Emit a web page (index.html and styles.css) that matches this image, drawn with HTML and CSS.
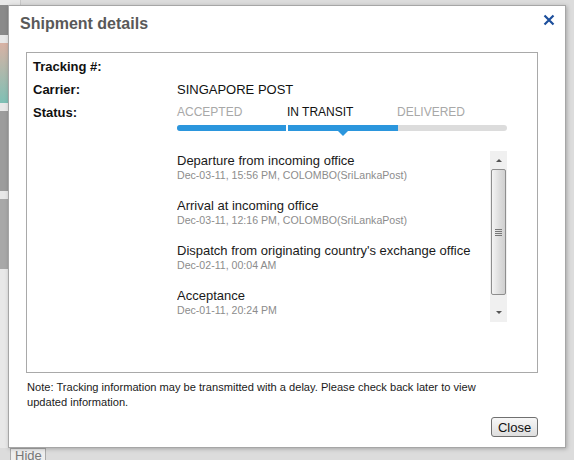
FILE: index.html
```html
<!DOCTYPE html>
<html lang="en">
<head>
    <meta charset="UTF-8">
    <title>Shipment details</title>
    <link rel="stylesheet" href="styles.css">
</head>
<body>
    <div class="page">
        <div class="side">
            <div class="thumb t1"></div>
            <div class="thumb t2"></div>
            <div class="thumb t3"></div>
            <div class="thumb t4"></div>
        </div>
        <button class="hide-btn">Hide</button>
    </div>

    <div class="dialog">
        <div class="dialog-head">
            <h2>Shipment details</h2>
            <span class="close-x">
                <svg width="12" height="12" viewBox="0 0 12 12"><path d="M1.5 1.5 L10.5 10.5 M10.5 1.5 L1.5 10.5" stroke="#1d4f9c" stroke-width="2.2" fill="none"/></svg>
            </span>
        </div>

        <div class="details">
            <div class="row">
                <div class="label">Tracking #:</div>
                <div class="value"></div>
            </div>
            <div class="row">
                <div class="label">Carrier:</div>
                <div class="value">SINGAPORE POST</div>
            </div>
            <div class="row status-row">
                <div class="label">Status:</div>
                <div class="value">
                    <div class="steps">
                        <span class="step">ACCEPTED</span>
                        <span class="step current">IN TRANSIT</span>
                        <span class="step">DELIVERED</span>
                    </div>
                    <div class="bar">
                        <div class="seg done"></div>
                        <div class="seg done"></div>
                        <div class="seg"></div>
                    </div>
                </div>
            </div>

            <div class="events-wrap">
                <div class="events">
                    <div class="event">
                        <div class="ev-title">Departure from incoming office</div>
                        <div class="ev-date">Dec-03-11, 15:56 PM, COLOMBO(SriLankaPost)</div>
                    </div>
                    <div class="event">
                        <div class="ev-title">Arrival at incoming office</div>
                        <div class="ev-date">Dec-03-11, 12:16 PM, COLOMBO(SriLankaPost)</div>
                    </div>
                    <div class="event">
                        <div class="ev-title">Dispatch from originating country's exchange office</div>
                        <div class="ev-date">Dec-02-11, 00:04 AM</div>
                    </div>
                    <div class="event">
                        <div class="ev-title">Acceptance</div>
                        <div class="ev-date">Dec-01-11, 20:24 PM</div>
                    </div>
                </div>
                <div class="scrollbar">
                    <div class="arrow up"></div>
                    <div class="sb-thumb"><span class="grip"></span></div>
                    <div class="arrow down"></div>
                </div>
            </div>
        </div>

        <p class="note">Note: Tracking information may be transmitted with a delay. Please check back later to view updated information.</p>

        <div class="actions">
            <button class="close-btn">Close</button>
        </div>
    </div>
</body>
</html>
```

FILE: styles.css
```css
body {
    margin: 0;
    font-family: "Liberation Sans", Arial, sans-serif;
    background-color: #dcdcdc;
    width: 574px;
    height: 460px;
    overflow: hidden;
    position: relative;
}
.page {
    height: 460px;
    display: flex;
    flex-direction: column;
}
.side {
    width: 20px;
    flex: 1;
    padding-top: 5px;
    background: #e8e8e8;
    border-right: 1px solid #c8c8c8;
    display: flex;
    flex-direction: column;
    gap: 8px;
}
.t1 { background: #8a8a8a; height: 30px; }
.t2 { background: linear-gradient(#d8b2a4, #7fc0b5); height: 60px; }
.t3 { background: #9c9c9c; height: 80px; }
.t4 { background: #a8a8a8; height: 70px; }
.hide-btn {
    margin: 0 0 -4px 10px;
    width: 36px;
    height: 16px;
    padding: 0 0 0 4px;
    font-family: "Liberation Sans", Arial, sans-serif;
    font-size: 13px;
    line-height: 14px;
    color: #777;
    background: #eee;
    border: 1px solid #aaa;
    text-align: left;
}
.dialog {
    position: absolute;
    left: 8px;
    top: 5px;
    width: 558px;
    height: 443px;
    background: #fff;
    border: 1px solid #a6a6a6;
    box-shadow: 1px 1px 4px rgba(0, 0, 0, 0.25);
    padding: 0 27px 0 17px;
    box-sizing: border-box;
}
.dialog-head {
    display: flex;
    justify-content: space-between;
    align-items: center;
    height: 35px;
    padding-top: 1px;
    box-sizing: border-box;
}
.dialog-head h2 {
    margin: 0 0 0 -6px;
    font-size: 16px;
    color: #595959;
}
.close-x {
    margin-right: -17px;
    margin-top: -9px;
    display: flex;
}
.details {
    margin-top: 11px;
    border: 1px solid #a9a9a9;
    height: 321px;
    box-sizing: border-box;
    padding: 2px 0 0 6px;
}
.row {
    display: flex;
    font-size: 13px;
    line-height: 23px;
    color: #111;
}
.label {
    width: 144px;
    font-weight: bold;
}
.value {
    flex: 1;
    position: relative;
}
.steps {
    display: flex;
    font-size: 12px;
}
.step {
    width: 110px;
    color: #a8a8a8;
}
.step.current {
    color: #111;
}
.bar {
    display: flex;
    width: 330px;
    height: 6px;
    margin-top: 1px;
    border-radius: 3px;
    overflow: hidden;
    background: #dcdcdc;
}
.seg {
    width: 110px;
}
.seg.done {
    background: #2b96dd;
}
.seg.done + .seg.done {
    border-left: 2px solid #fff;
}
.status-row .value::after {
    content: "";
    position: absolute;
    left: 160px;
    top: 29px;
    border-left: 6px solid transparent;
    border-right: 6px solid transparent;
    border-top: 6px solid #2b96dd;
}
.events-wrap {
    display: flex;
    margin: 21px 0 0 144px;
    width: 330px;
    height: 170px;
}
.events {
    flex: 1;
    overflow: hidden;
    padding-top: 1px;
}
.event {
    height: 45px;
}
.ev-title {
    font-size: 13px;
    line-height: 15px;
    color: #1a1a1a;
}
.ev-date {
    font-size: 10.6px;
    line-height: 15px;
    color: #8c8c8c;
}
.scrollbar {
    width: 17px;
    display: flex;
    flex-direction: column;
    background: #f0f0f0;
    margin-top: -1px;
}
.arrow {
    height: 18px;
    position: relative;
}
.arrow.down {
    height: 26px;
    margin-top: auto;
}
.arrow::after {
    content: "";
    position: absolute;
    left: 6px;
    border-left: 3px solid transparent;
    border-right: 3px solid transparent;
}
.arrow.up::after {
    top: 8px;
    border-bottom: 3px solid #555;
}
.arrow.down::after {
    top: 15px;
    border-top: 3px solid #555;
}
.sb-thumb {
    height: 126px;
    margin: 0 1px;
    border: 1px solid #8e8e8e;
    border-radius: 2px;
    background: linear-gradient(to right, #f4f4f4, #dcdcdc 60%, #d0d0d0);
    box-sizing: border-box;
    display: flex;
    align-items: center;
    justify-content: center;
}
.grip {
    width: 7px;
    height: 7px;
    background: repeating-linear-gradient(#777 0 1px, transparent 1px 2px);
}
.note {
    margin: 7px 0 0 1px;
    width: 480px;
    font-size: 11.1px;
    line-height: 15px;
    color: #1a1a1a;
}
.actions {
    display: flex;
    justify-content: flex-end;
    margin-top: 7px;
}
.close-btn {
    font-family: "Liberation Sans", Arial, sans-serif;
    font-size: 13px;
    height: 20px;
    width: 47px;
    padding: 0;
    color: #111;
    background: linear-gradient(#f7f7f7, #dedede);
    border: 1px solid #707070;
    border-radius: 3px;
}
```
